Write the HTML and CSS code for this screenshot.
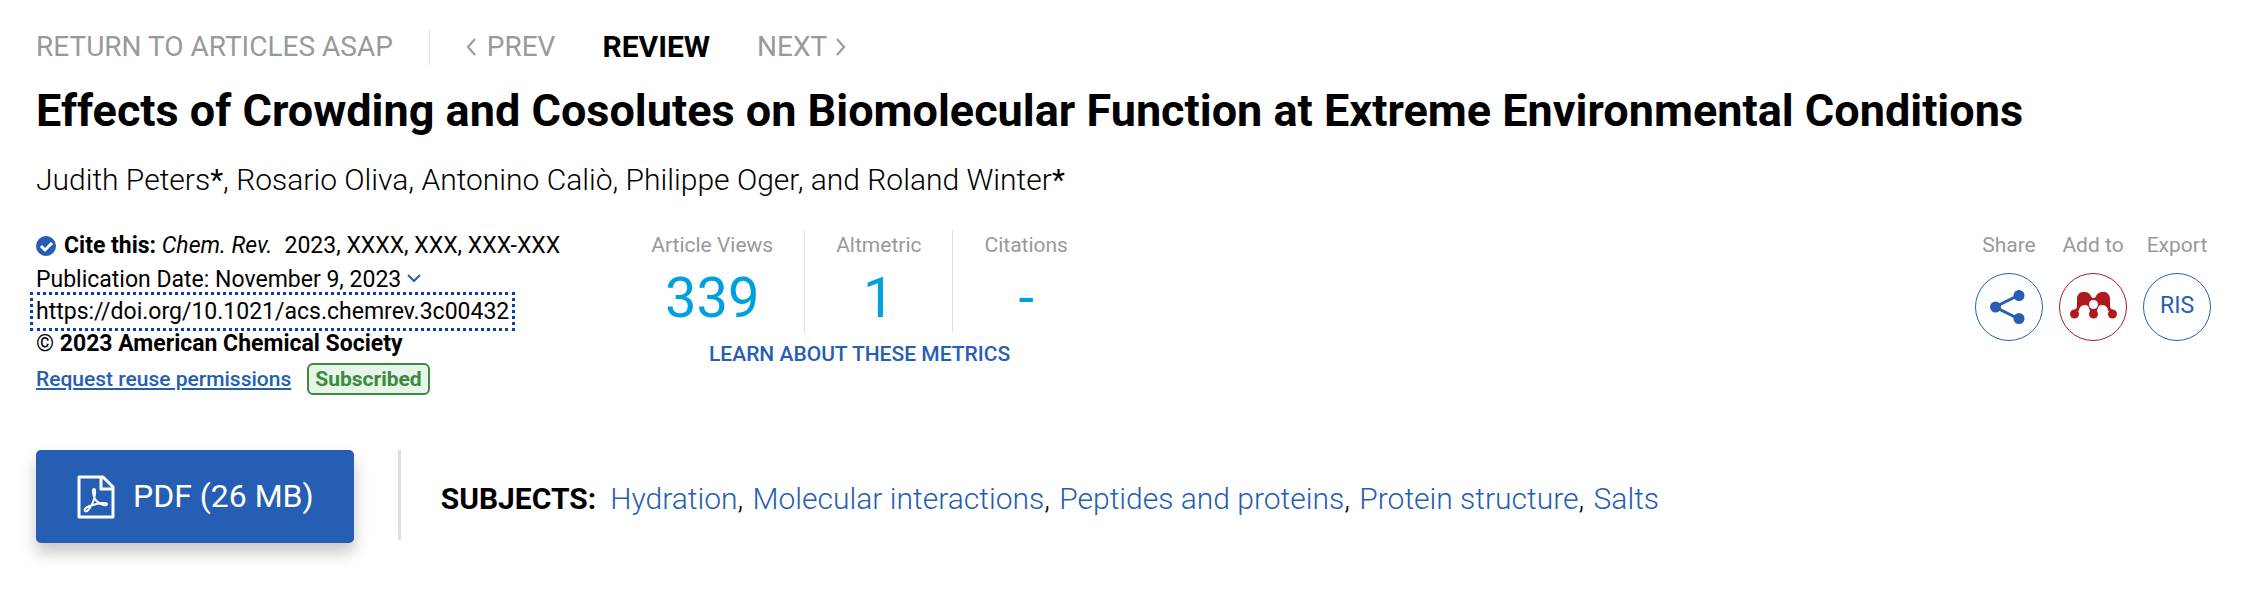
FILE: index.html
```html
<!DOCTYPE html>
<html lang="en">
<head>
  <meta charset="UTF-8">
  <meta name="viewport" content="width=device-width, initial-scale=1.0">
  <title>Effects of Crowding and Cosolutes on Biomolecular Function</title>
  <link rel="stylesheet" href="styles.css">
</head>
<body>
  <main class="article">
    <!-- Navigation -->
    <nav class="article-nav">
      <a class="nav-return" href="#">RETURN TO ARTICLES ASAP</a>
      <a class="nav-prev" href="#">
        <svg width="10" height="18" viewBox="0 0 10 18"><path d="M9 1 2 9l7 8"/></svg>
        PREV
      </a>
      <span class="nav-current">REVIEW</span>
      <a class="nav-next" href="#">
        NEXT
        <svg width="10" height="18" viewBox="0 0 10 18"><path d="m1 1 7 8-7 8"/></svg>
      </a>
    </nav>

    <h1>Effects of Crowding and Cosolutes on Biomolecular Function at Extreme Environmental Conditions</h1>
    <p class="authors">Judith Peters<b>*</b>, Rosario Oliva, Antonino Caliò, Philippe Oger, and Roland Winter<b>*</b></p>

    <div class="details">
      <!-- Citation -->
      <div class="citation">
        <div class="line cite">
          <svg width="20" height="20" viewBox="0 0 20 20"><circle cx="10" cy="10" r="10" fill="#255eb2"/><path d="m5 10 4 4 7-7" fill="none" stroke="#fff" stroke-width="3"/></svg>
          <span><strong>Cite this:</strong> <i>Chem. Rev.</i></span>
          <span>2023, XXXX, XXX, XXX-XXX</span>
        </div>
        <div class="line">Publication Date: November 9, 2023
          <svg class="chevron" width="14" height="9" viewBox="0 0 14 9"><path d="m1 1 6 6 6-6"/></svg>
        </div>
        <div class="line"><a class="doi" href="#">https://doi.org/10.1021/acs.chemrev.3c00432</a></div>
        <div class="line">© <strong>2023 American Chemical Society</strong></div>
        <div class="rights">
          <a href="#">Request reuse permissions</a>
          <span class="badge">Subscribed</span>
        </div>
      </div>

      <!-- Metrics -->
      <div class="metrics">
        <dl class="metric-list">
          <div><dt>Article Views</dt><dd>339</dd></div>
          <div><dt>Altmetric</dt><dd>1</dd></div>
          <div><dt>Citations</dt><dd>-</dd></div>
        </dl>
        <a href="#">LEARN ABOUT THESE METRICS</a>
      </div>

      <!-- Share, Mendeley, Export -->
      <div class="tools">
        <div class="tool">
          <span id="share-label">Share</span>
          <button type="button" aria-labelledby="share-label">
            <svg width="38" height="40" viewBox="0 -5 38 40">
              <path d="M29 5 5 17l24 12" fill="none" stroke="#255eb2" stroke-width="3"/>
              <g fill="#255eb2"><circle cx="5.5" cy="17" r="5.5"/><circle cx="29" cy="5.5" r="5.5"/><circle cx="29" cy="28.5" r="5.5"/></g>
            </svg>
          </button>
        </div>
        <div class="tool">
          <span id="add-label">Add to</span>
          <button type="button" class="mendeley" aria-labelledby="add-label">
            <svg width="47" height="27" viewBox="0 0 47 27" fill="#ae1a22">
              <path d="M7 7C7-2 18-2 21 4c1 3 4 3 5 0 3-6 14-6 14 3v7c0 2 1 3 3 4l-5 1c0-3-2-6-6-6-3 0-4 2-5 6h-7c-1-4-2-6-5-6-4 0-6 3-6 6l-5-1c2-1 3-2 3-4z"/>
              <circle cx="4.5" cy="22" r="4.5"/><circle cx="23.5" cy="22" r="4.5"/><circle cx="42.5" cy="22" r="4.5"/>
              <circle cx="23.5" cy="12.5" r="4.5" fill="#fff"/>
            </svg>
          </button>
        </div>
        <div class="tool">
          <span id="export-label">Export</span>
          <button type="button" aria-describedby="export-label">RIS</button>
        </div>
      </div>
    </div>

    <!-- Download and subjects -->
    <div class="bottom">
      <button type="button" class="pdf">
        <svg width="38" height="44" viewBox="0 0 38 44" fill="none" stroke="#fff" stroke-width="3" stroke-linejoin="round">
          <path d="M2 2h24l10 10v30H2zM24 2v12h12"/>
          <path d="M17 14c-2 0-1 6 1 10 3 5 12 8 12 5 0-2-9-1-14 1-5 1-10 4-8 6s6-4 8-9c2-4 3-13 1-13z" stroke-width="2"/>
        </svg>
        PDF (26 MB)
      </button>
      <div class="subjects">
        <strong>SUBJECTS:</strong>
        <span><a href="#">Hydration</a>, <a href="#">Molecular interactions</a>, <a href="#">Peptides and proteins</a>, <a href="#">Protein structure</a>, <a href="#">Salts</a></span>
      </div>
    </div>
  </main>
</body>
</html>
```

FILE: styles.css
```css
* {
  box-sizing: border-box;
}
body {
  margin: 0;
  background: #fff;
  color: #000;
  font-family: Roboto, sans-serif;
  font-size: 21px;
}
a {
  color: #255eb2;
  text-decoration: none;
}
button {
  font-family: inherit;
  cursor: pointer;
}
.article {
  padding: 29px 40px 40px 36px;
}
.article-nav {
  display: flex;
  align-items: center;
  font-size: 28px;
  line-height: 36px;
}
.article-nav a {
  color: #979a9c;
}
.article-nav svg {
  fill: none;
  stroke: #979a9c;
  stroke-width: 2;
}
.article-nav .nav-return {
  padding-right: 36px;
  border-right: 1px solid #d9e2e8;
}
.nav-prev {
  margin-left: 36px;
}
.nav-prev svg {
  margin-right: 4px;
}
.nav-next svg {
  margin-left: 2px;
}
.nav-current {
  margin: 0 47px;
  font-size: 30px;
  font-weight: 700;
}
h1 {
  margin: 18px 0 0;
  font-size: 45px;
  line-height: 56px;
  font-weight: 700;
}
.authors {
  margin: 23px 0 0;
  font-size: 30px;
  line-height: 36px;
  font-weight: 300;
}
.authors b {
  font-weight: 400;
}
.details {
  display: flex;
  align-items: flex-start;
  margin-top: 32px;
}
.line {
  font-size: 23px;
  line-height: 32px;
}
.cite {
  display: flex;
  align-items: center;
  gap: 8px;
  margin-bottom: 2px;
}
.cite span + span {
  margin-left: 4px;
}
.chevron {
  fill: none;
  stroke: #255eb2;
  stroke-width: 2;
  vertical-align: 4px;
}
.doi {
  color: #000;
  outline: 3px dotted #0a3fa8;
  outline-offset: 3px;
}
.rights {
  display: flex;
  align-items: center;
  gap: 16px;
  line-height: 28px;
  font-weight: 500;
  margin-top: 3px;
}
.rights a {
  text-decoration: underline;
}
.badge {
  padding: 0 6px;
  border: 2px solid #3a8a40;
  border-radius: 6px;
  background: #e6f5e8;
  color: #3a8a40;
  font-weight: 700;
}
.metrics {
  margin-left: 60px;
  text-align: center;
}
.metric-list {
  display: flex;
  margin: 0 0 7px;
}
.metric-list div {
  height: 103px;
  padding: 0 31px;
}
.metric-list div + div {
  border-left: 1px solid #d9e2e8;
}
.metric-list dt {
  color: #979a9c;
  line-height: 30px;
}
.metric-list dd {
  margin: 0;
  color: #00a0e0;
  font-size: 56px;
  line-height: 76px;
}
.metrics a {
  line-height: 28px;
  font-weight: 500;
}
.tools {
  display: flex;
  gap: 16px;
  margin-left: auto;
}
.tool {
  display: flex;
  flex-direction: column;
  align-items: center;
  gap: 13px;
  width: 68px;
  color: #979a9c;
  line-height: 30px;
  white-space: nowrap;
}
.tool button {
  display: flex;
  align-items: center;
  justify-content: center;
  width: 68px;
  height: 68px;
  padding: 0 0 4px;
  border: 1px solid #255eb2;
  border-radius: 50%;
  background: #fff;
  color: #255eb2;
  font-size: 23px;
}
.tool .mendeley {
  border-color: #ae1a22;
}
.bottom {
  display: flex;
  align-items: flex-start;
  margin-top: 55px;
}
.pdf {
  display: flex;
  align-items: center;
  gap: 18px;
  padding: 24px 40px 24px 41px;
  border: none;
  border-radius: 5px;
  background: #255eb2;
  box-shadow: 0 10px 16px rgba(0, 0, 0, 0.22);
  color: #fff;
  font-size: 32px;
  line-height: 45px;
}
.subjects {
  display: flex;
  align-items: center;
  gap: 14px;
  height: 90px;
  margin-left: 44px;
  padding: 6px 0 0 40px;
  border-left: 3px solid #d9e2e8;
  font-size: 30px;
  font-weight: 300;
}
.subjects strong {
  font-weight: 700;
}
.subjects a + a {
  margin-left: 2px;
}
```
